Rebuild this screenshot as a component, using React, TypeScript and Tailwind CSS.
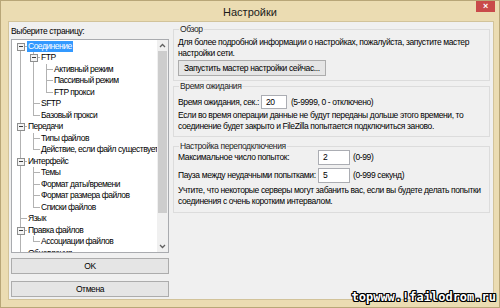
import React from 'react';

interface TreeRow {
  label: string;
  level: number;
  open?: boolean;
  selected?: boolean;
}

const rows: TreeRow[] = [
  { label: 'Соединение', level: 0, open: true, selected: true },
  { label: 'FTP', level: 1, open: true },
  { label: 'Активный режим', level: 2 },
  { label: 'Пассивный режим', level: 2 },
  { label: 'FTP прокси', level: 2 },
  { label: 'SFTP', level: 1 },
  { label: 'Базовый прокси', level: 1 },
  { label: 'Передачи', level: 0, open: true },
  { label: 'Типы файлов', level: 1 },
  { label: 'Действие, если файл существует', level: 1 },
  { label: 'Интерфейс', level: 0, open: true },
  { label: 'Темы', level: 1 },
  { label: 'Формат даты/времени', level: 1 },
  { label: 'Формат размера файлов', level: 1 },
  { label: 'Списки файлов', level: 1 },
  { label: 'Язык', level: 0 },
  { label: 'Правка файлов', level: 0, open: true },
  { label: 'Ассоциации файлов', level: 1 },
  { label: 'Обновления', level: 0 },
  { label: 'Журналирование', level: 0 },
  { label: 'Отладка', level: 0 },
];

// rows past the box bottom are never seen
const VISIBLE = 19;

const COL = 13;
const ROW_H = 11.5;

// is there a later row at this level before the branch closes
const hasNext = (i: number, level: number) => {
  for (let j = i + 1; j < rows.length; j++) {
    if (rows[j].level < level) return false;
    if (rows[j].level === level) return true;
  }
  return false;
};

const Guides: React.FC<{ index: number }> = ({ index }) => {
  const row = rows[index];
  const w = (row.level + 1) * COL;
  const mid = ROW_H / 2;
  const lines: React.ReactNode[] = [];

  for (let a = 0; a < row.level; a++) {
    if (hasNext(index, a)) {
      const x = a * COL + 6.5;
      lines.push(<line key={'v' + a} x1={x} y1={0} x2={x} y2={ROW_H} />);
    }
  }
  const cx = row.level * COL + 6.5;
  if (index > 0) lines.push(<line key="up" x1={cx} y1={0} x2={cx} y2={mid} />);
  if (hasNext(index, row.level)) lines.push(<line key="dn" x1={cx} y1={mid} x2={cx} y2={ROW_H} />);
  lines.push(<line key="h" x1={cx} y1={mid} x2={cx + 6} y2={mid} />);

  return (
    <svg width={w} height={ROW_H} className="shrink-0">
      <g stroke="#b2b2b2" strokeWidth="1" shapeRendering="crispEdges">{lines}</g>
      {row.open && (
        <g shapeRendering="crispEdges">
          <rect x={cx - 3.5} y={mid - 3.5} width="7" height="7" fill="#f4f4f4" stroke="#8e8f8f" />
          <line x1={cx - 1.5} y1={mid} x2={cx + 2.5} y2={mid} stroke="#3c3c3c" />
        </g>
      )}
    </svg>
  );
};

const Chevron: React.FC<{ up?: boolean }> = ({ up }) => (
  <svg width="7" height="5" viewBox="0 0 7 5">
    <polyline
      points={up ? '1,4 3.5,1.5 6,4' : '1,1 3.5,3.5 6,1'}
      fill="none"
      stroke="#606060"
      strokeWidth="1.3"
    />
  </svg>
);

const WinButton: React.FC<{ children: React.ReactNode; className?: string }> = ({ children, className }) => (
  <button
    className={
      'flex items-center justify-center whitespace-nowrap border border-[#acacac] bg-[#e5e5e5] text-[8.5px] leading-none text-black ' +
      (className || '')
    }
  >
    {children}
  </button>
);

const Field: React.FC<{ value: string; className?: string }> = ({ value, className }) => (
  <div
    className={
      'flex items-center border border-[#abadb3] bg-white pl-[4px] text-[8.5px] leading-none text-black ' +
      (className || '')
    }
  >
    {value}
  </div>
);

const App: React.FC = () => {
  return (
    <div className="relative flex h-[308px] w-[500px] flex-col overflow-hidden border border-[#b8a678] bg-[#ebdcb2] font-['Liberation_Sans',Arial,sans-serif] tracking-[-0.38px] text-black">
      {/* Title bar */}
      <div className="grid h-[20px] grid-cols-[1fr_auto_1fr] items-start">
        <div />
        <div className="pt-[5px] text-[11px] leading-[12px] tracking-normal text-[#1a1a1a]">Настройки</div>
        <div className="flex justify-end pr-[4px]">
          <div className="flex h-[11px] w-[19px] items-center justify-center bg-[#c94a4a] text-[9px] font-bold leading-none text-white">
            ×
          </div>
        </div>
      </div>

      {/* Client area */}
      <div className="ml-[7px] mr-[5px] flex h-[279px] gap-[4px] border border-[#d2c39a] bg-[#f0f0f0] pl-[2px] pr-[3px]">
        {/* Left column */}
        <div className="flex w-[158px] flex-col pt-[4px]">
          <div className="h-[11px] text-[8.5px] leading-[11px]">Выберите страницу:</div>
          <div className="mt-[2px] flex h-[214px] overflow-hidden border border-[#a9abaf] bg-white">
            <div className="h-full flex-1 overflow-hidden pl-[2px] pt-[0.5px]">
              {rows.slice(0, VISIBLE).map((row, i) => (
                <div key={row.label} className="flex h-[11.5px] items-center">
                  <Guides index={i} />
                  <span
                    className={
                      'whitespace-nowrap px-[1px] text-[8.5px] leading-[11px] tracking-[-0.5px] ' +
                      (row.selected ? 'bg-[#3399ff] text-white' : 'text-black')
                    }
                  >
                    {row.label}
                  </span>
                </div>
              ))}
            </div>
            <div className="flex w-[11px] flex-col bg-[#f0f0f0]">
              <div className="flex h-[11px] items-center justify-center">
                <Chevron up />
              </div>
              <div className="mx-[1px] h-[162px] bg-[#cdcdcd]" />
              <div className="flex-1" />
              <div className="flex h-[11px] items-center justify-center">
                <Chevron />
              </div>
            </div>
          </div>
          <WinButton className="mt-[5px] h-[16px] w-full">OK</WinButton>
          <WinButton className="mt-[7px] h-[16px] w-full">Отмена</WinButton>
        </div>

        {/* Right column */}
        <div className="flex flex-1 flex-col whitespace-nowrap pt-[2px] text-[8.5px] leading-[11px]">
          <fieldset className="border border-[#dcdcdc] px-[4px] pb-[4px]">
            <legend className="ml-[1px] px-[1px] leading-[11px] text-[#1e1e1e]">Обзор</legend>
            <p className="pt-[2px]">
              Для более подробной информации о настройках, пожалуйста, запустите мастер
              <br />
              настройки сети.
            </p>
            <WinButton className="mt-[1px] h-[16px] px-[5px]">Запустить мастер настройки сейчас...</WinButton>
          </fieldset>

          <fieldset className="border border-[#dcdcdc] px-[4px] pb-[4px]">
            <legend className="ml-[1px] px-[1px] leading-[11px] text-[#1e1e1e]">Время ожидания</legend>
            <div className="mt-[3px] flex items-center gap-[2px]">
              <span>Время ожидания, сек.:</span>
              <Field value="20" className="h-[14px] w-[26px]" />
              <span className="ml-[2px]">(5-9999, 0 - отключено)</span>
            </div>
            <p className="mt-[1px]">
              Если во время операции данные не будут переданы дольше этого времени, то
              <br />
              соединение будет закрыто и FileZilla попытается подключиться заново.
            </p>
          </fieldset>

          <fieldset className="mt-[4px] border border-[#dcdcdc] px-[4px] pb-[5px]">
            <legend className="ml-[1px] px-[1px] leading-[11px] text-[#1e1e1e]">Настройка переподключения</legend>
            <div className="-mt-[2px] flex items-center">
              <span className="w-[140px]">Максимальное число попыток:</span>
              <Field value="2" className="h-[15px] w-[32px]" />
              <span className="ml-[3px]">(0-99)</span>
            </div>
            <div className="mt-[3px] flex items-center">
              <span className="w-[140px]">Пауза между неудачными попытками:</span>
              <Field value="5" className="h-[15px] w-[32px]" />
              <span className="ml-[3px]">(0-999 секунд)</span>
            </div>
            <p className="mt-[2px]">
              Учтите, что некоторые серверы могут забанить вас, если вы будете делать попытки
              <br />
              соединения с очень коротким интервалом.
            </p>
          </fieldset>
        </div>
      </div>

      {/* watermark */}
      <div className="absolute bottom-[4px] right-[3px] font-['DejaVu_Sans_Mono',monospace] text-[12px] font-bold leading-[12px] tracking-[0px] text-white [text-shadow:1px_0_0_#000,-1px_0_0_#000,0_1px_0_#000,0_-1px_0_#000,1px_1px_0_#000,-1px_-1px_0_#000,1px_-1px_0_#000,-1px_1px_0_#000]">
        topwww.!failodrom.ru
      </div>
    </div>
  );
};

export default App;
